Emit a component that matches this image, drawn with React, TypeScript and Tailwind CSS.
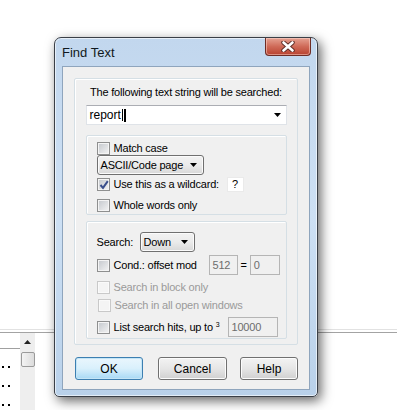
import React from "react";

const font = "font-['Liberation_Sans',Arial,sans-serif] text-[11px] tracking-[-0.2px] leading-none";

function Arrow() {
  return (
    <svg width="7" height="4" viewBox="0 0 7 4">
      <polygon points="0,0 7,0 3.5,4" fill="#000" />
    </svg>
  );
}

function Check({ checked, disabled }: { checked?: boolean; disabled?: boolean }) {
  return (
    <span
      className={
        disabled
          ? "relative shrink-0 w-[13px] h-[13px] border border-[#c9c9c9] bg-[#f4f4f4] shadow-[inset_0_0_0_1px_#fafafa]"
          : "relative shrink-0 w-[13px] h-[13px] border border-[#8e8f8f] bg-gradient-to-br from-[#c3c7cc] to-[#f4f4f4] shadow-[inset_0_0_0_1px_#f4f4f4]"
      }
    >
      {checked && (
        <svg className="absolute left-[1px] top-[1px]" width="10" height="10" viewBox="0 0 10 10">
          <path d="M1.5 5 L4 7.8 L8.8 1.2" stroke="#3a4f8c" strokeWidth="2" fill="none" />
        </svg>
      )}
    </span>
  );
}

function Field({ value, w }: { value: string; w: string }) {
  return (
    <div className={`${w} h-[20px] flex items-center px-[3px] border border-[#b5b5b5] bg-[#f0f0f0] text-[#6d6d6d]`}>
      {value}
    </div>
  );
}

function Btn({ label, w, def }: { label: string; w: string; def?: boolean }) {
  return (
    <div
      className={`${w} h-[23px] flex items-center justify-center rounded-[3px] border ${
        def
          ? "border-[#3c7fb1] bg-gradient-to-b from-[#eaf6fd] via-[#d9f0fc] to-[#a7d9f5] shadow-[inset_0_0_0_1px_#c4e5f6]"
          : "border-[#707070] bg-gradient-to-b from-[#f3f3f3] via-[#e6e6e6] to-[#d0d0d0] shadow-[inset_0_0_0_1px_#fcfcfc]"
      }`}
    >
      {label}
    </div>
  );
}

function Combo({ label, w }: { label: string; w: string }) {
  return (
    <div
      className={`${w} h-[20px] flex items-center justify-between pl-[3px] pr-[6px] rounded-[3px] border border-[#707070] bg-gradient-to-b from-[#f2f2f2] via-[#ebebeb] to-[#d8d8d8] shadow-[inset_0_0_0_1px_#fbfbfb]`}
    >
      <span className="whitespace-nowrap text-[11px]">{label}</span>
      <Arrow />
    </div>
  );
}

export default function App() {
  return (
    <div className={`relative w-[397px] h-[410px] overflow-hidden bg-white ${font}`}>
      {/* app behind the dialog */}
      <div className="flex flex-col h-full">
        <div className="h-[329px]" />
        <div className="h-px bg-[#e2e2e2]" />
        <div className="h-[2px]" />
        <div className="h-px bg-[#a3a3a3]" />
        <div className="flex flex-1">
          <div className="w-[20px] flex flex-col">
            <div className="h-[15px]" />
            <div className="h-px bg-[#a0a0a0]" />
            <div className="flex flex-col gap-[17px] pt-[17px] pl-[2px]">
              {[0, 1, 2].map((i) => (
                <div key={i} className="flex gap-[4px]">
                  <span className="w-[2px] h-[2px] bg-black" />
                  <span className="w-[2px] h-[2px] bg-black" />
                </div>
              ))}
            </div>
          </div>
          <div className="w-[15px] bg-[#eeeeee] flex flex-col items-center pt-[7px]">
            <svg width="7" height="4" viewBox="0 0 7 4">
              <polygon points="0,4 7,4 3.5,0" fill="#222" />
            </svg>
            <div className="mt-[8px] w-[14px] h-[15px] rounded-[2px] border border-[#9a9a9a] bg-gradient-to-r from-[#f3f3f3] to-[#dcdcdc]" />
          </div>
          <div className="flex-1" />
        </div>
      </div>

      {/* dialog window */}
      <div className="absolute left-[54px] top-[37px] w-[264px] h-[360px] flex flex-col px-[7px] pb-[6px] rounded-t-[7px] rounded-b-[5px] border border-[#3a3f47] bg-gradient-to-b from-[#c2d7ee] via-[#cde0f4] to-[#b9d1ea] shadow-[3px_4px_12px_rgba(0,0,0,0.6),inset_0_0_0_1px_rgba(255,255,255,0.6)]">
        <div className="h-[28px] flex items-center text-[13px] tracking-normal text-[#101820]">
          Find Text
        </div>
        <div className="absolute right-[6px] top-0 w-[46px] h-[18px] flex items-center justify-center rounded-b-[4px] border border-t-0 border-[#6e2c25] bg-gradient-to-b from-[#e5a192] via-[#cf6a58] to-[#b8412f] shadow-[inset_0_0_0_1px_rgba(255,220,210,0.5)]">
          <svg width="14" height="11" viewBox="0 0 14 11">
            <path d="M2.5 1.5 L11.5 9.5 M11.5 1.5 L2.5 9.5" stroke="#5a2a25" strokeWidth="4.4" strokeLinecap="round" />
            <path d="M2.5 1.5 L11.5 9.5 M11.5 1.5 L2.5 9.5" stroke="#fff" strokeWidth="2.6" strokeLinecap="round" />
          </svg>
        </div>

        <div className="flex-1 flex flex-col bg-[#f0f0f0] border border-[#8fa5bd] px-[11px] pt-[11px]">
          {/* main group */}
          <div className="w-[224px] h-[267px] flex flex-col items-center border border-[#d5dfe5] rounded-[2px] shadow-[inset_1px_1px_0_#fff] pt-[8px]">
            <div className="text-black">The following text string will be searched:</div>
            <div className="mt-[7px] w-[201px] h-[20px] flex items-center justify-between pl-[3px] pr-[5px] bg-white border border-[#dfe3e8] border-t-[#abadb3]">
              <span className="flex items-center text-[12px] tracking-normal">
                report
                <span className="ml-[1px] w-px h-[12px] bg-black" />
                <span className="ml-[1px] w-[2px] h-[13px] bg-black" />
              </span>
              <Arrow />
            </div>

            {/* options group */}
            <div className="mt-[10px] w-[201px] h-[80px] flex flex-col border border-[#d5dfe5] rounded-[2px] shadow-[inset_1px_1px_0_#fff] pl-[10px] pt-[6px]">
              <div className="flex items-center gap-[4px] h-[13px]">
                <Check />
                <span>Match case</span>
              </div>
              <Combo label="ASCII/Code page" w="w-[107px]" />
              <div className="mt-[2px] flex items-center gap-[4px] h-[15px]">
                <Check checked />
                <span>Use this as a wildcard:</span>
                <div className="ml-[4px] w-[17px] h-[15px] flex items-center pl-[4px] bg-white border border-[#eaeaea]">?</div>
              </div>
              <div className="mt-[7px] flex items-center gap-[4px] h-[13px]">
                <Check />
                <span>Whole words only</span>
              </div>
            </div>

            {/* search group */}
            <div className="mt-[6px] w-[201px] h-[118px] flex flex-col border border-[#d5dfe5] rounded-[2px] shadow-[inset_1px_1px_0_#fff] pl-[10px] pt-[10px]">
              <div className="flex items-center h-[20px]">
                <span className="w-[43px]">Search:</span>
                <Combo label="Down" w="w-[55px]" />
              </div>
              <div className="mt-[3px] flex items-center h-[20px]">
                <Check />
                <span className="ml-[4px] w-[95px]">Cond.: offset mod</span>
                <Field value="512" w="w-[29px]" />
                <span className="mx-[3px]">=</span>
                <Field value="0" w="w-[30px]" />
              </div>
              <div className="mt-[6px] flex items-center gap-[4px] h-[13px] text-[#9a9a9a]">
                <Check disabled />
                <span>Search in block only</span>
              </div>
              <div className="mt-[5px] pl-[1px] flex items-center gap-[4px] h-[13px] text-[#9a9a9a]">
                <Check disabled />
                <span>Search in all open windows</span>
              </div>
              <div className="mt-[5px] flex items-center h-[20px]">
                <Check />
                <span className="ml-[4px] w-[114px]">
                  List search hits, up to <sup className="text-[7px]">3</sup>
                </span>
                <Field value="10000" w="w-[50px]" />
              </div>
            </div>
          </div>

          {/* buttons */}
          <div className="mt-[12px] flex items-center pl-[1px] text-[12px] tracking-normal">
            <Btn label="OK" w="w-[68px]" def />
            <div className="w-[15px]" />
            <Btn label="Cancel" w="w-[69px]" />
            <div className="w-[13px]" />
            <Btn label="Help" w="w-[58px]" />
          </div>
        </div>
      </div>
    </div>
  );
}
